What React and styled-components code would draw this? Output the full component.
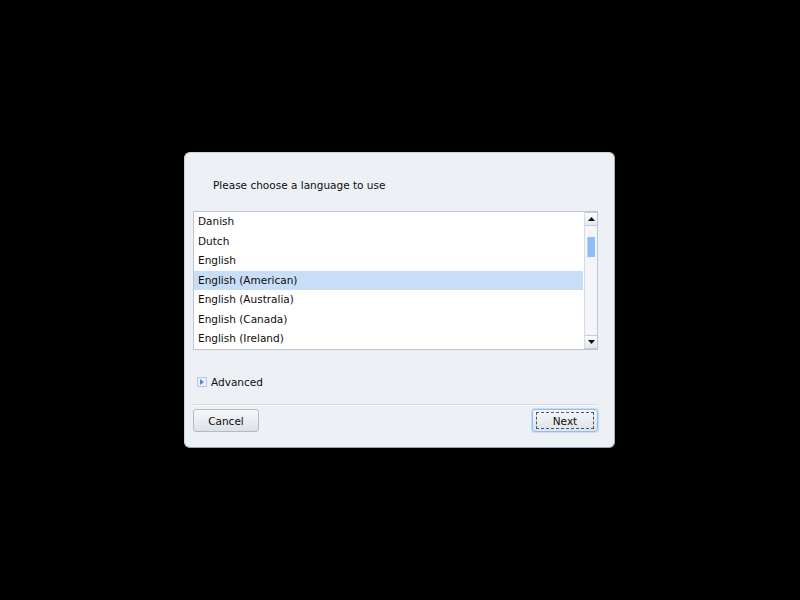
import React, { useState } from 'react';
import styled, { createGlobalStyle } from 'styled-components';

const GlobalStyle = createGlobalStyle`
  html, body {
    margin: 0;
    padding: 0;
    background: #000;
  }
  body {
    font-family: "DejaVu Sans", "Liberation Sans", sans-serif;
    font-size: 10.5px;
    color: #0d0d0d;
  }
`;

const Screen = styled.div`
  width: 800px;
  height: 600px;
  display: flex;
  align-items: center;
  justify-content: center;
  background: #000;
`;

const Dialog = styled.div`
  box-sizing: border-box;
  width: 431px;
  height: 296px;
  margin-left: -1px;
  background: #edf0f5;
  border: 1px solid #c9d1dc;
  border-right-color: #aab3bf;
  border-bottom-color: #9aa3ae;
  border-radius: 6px;
  padding: 0 16px 15px 8px;
  display: flex;
  flex-direction: column;
`;

const Title = styled.div`
  padding: 25px 0 0 20px;
  height: 35px;
  line-height: 15px;
`;

const ListBox = styled.div`
  box-sizing: border-box;
  height: 139px;
  background: #fff;
  border: 1px solid #bcc5d0;
  display: flex;
`;

const Rows = styled.div`
  flex: 1;
  overflow: hidden;
`;

const Row = styled.div`
  height: 19.5px;
  line-height: 19.5px;
  padding-left: 4px;
  background: ${(p) => (p.$selected ? '#c8ddf6' : 'transparent')};
  cursor: default;
`;

const ScrollBar = styled.div`
  width: 12px;
  margin-left: 1px;
  border-left: 1px solid #d6dce4;
  background: #f3f5f8;
  display: flex;
  flex-direction: column;
`;

const ArrowBtn = styled.div`
  height: 12px;
  background: linear-gradient(#fbfcfd, #e4e8ee);
  border: 1px solid #c6cdd6;
  border-left: none;
  border-right: none;
  display: flex;
  align-items: center;
  justify-content: center;
`;

const Track = styled.div`
  flex: 1;
  padding-top: 11px;
`;

const Thumb = styled.div`
  width: 7px;
  height: 20px;
  margin-left: 2px;
  background: #8fbcf4;
  border-left: 1px solid #b6d3f8;
`;

const Advanced = styled.div`
  display: flex;
  align-items: center;
  gap: 4px;
  margin-top: 26px;
  padding-left: 4px;
  height: 14px;
`;

const Expander = styled.span`
  box-sizing: border-box;
  width: 10px;
  height: 10px;
  border: 1px solid #b5c7e0;
  background: #eaf1fb;
  display: flex;
  align-items: center;
  justify-content: center;
`;

const Separator = styled.div`
  margin-top: 15px;
  border-top: 1px solid #d5dbe3;
  border-bottom: 1px solid #f8f9fb;
`;

const ButtonRow = styled.div`
  display: flex;
  justify-content: space-between;
  margin-top: 3px;
`;

const Button = styled.button`
  box-sizing: border-box;
  width: 66px;
  height: 23px;
  font-family: inherit;
  font-size: 10.5px;
  color: #0d0d0d;
  background: linear-gradient(#f6f7f9, #dde2e8);
  border: 1px solid ${(p) => (p.$focused ? '#8fbfee' : '#b3bac4')};
  box-shadow: ${(p) => (p.$focused ? '0 0 0 1px #c4def7' : 'none')};
  border-radius: 3px;
  padding: 0;
  display: flex;
  align-items: center;
  justify-content: center;
`;

const FocusLabel = styled.span`
  box-sizing: border-box;
  width: 58px;
  height: 17px;
  border: 1px dashed #555;
  display: flex;
  align-items: center;
  justify-content: center;
`;

const languages = [
  'Danish',
  'Dutch',
  'English',
  'English (American)',
  'English (Australia)',
  'English (Canada)',
  'English (Ireland)',
];

export default function App() {
  const [selected, setSelected] = useState(3);

  return (
    <Screen>
      <GlobalStyle />
      <Dialog>
        <Title>Please choose a language to use</Title>
        <ListBox>
          <Rows>
            {languages.map((lang, i) => (
              <Row key={lang} $selected={i === selected} onClick={() => setSelected(i)}>
                {lang}
              </Row>
            ))}
          </Rows>
          <ScrollBar>
            <ArrowBtn>
              <svg width="7" height="4" viewBox="0 0 7 4">
                <path d="M0 4 L3.5 0 L7 4 Z" fill="#111" />
              </svg>
            </ArrowBtn>
            <Track>
              <Thumb />
            </Track>
            <ArrowBtn>
              <svg width="7" height="4" viewBox="0 0 7 4">
                <path d="M0 0 L7 0 L3.5 4 Z" fill="#111" />
              </svg>
            </ArrowBtn>
          </ScrollBar>
        </ListBox>
        <Advanced>
          <Expander>
            <svg width="4" height="6" viewBox="0 0 4 6">
              <path d="M0 0 L4 3 L0 6 Z" fill="#4f86d6" />
            </svg>
          </Expander>
          Advanced
        </Advanced>
        <Separator />
        <ButtonRow>
          <Button>Cancel</Button>
          <Button $focused>
            <FocusLabel>Next</FocusLabel>
          </Button>
        </ButtonRow>
      </Dialog>
    </Screen>
  );
}
